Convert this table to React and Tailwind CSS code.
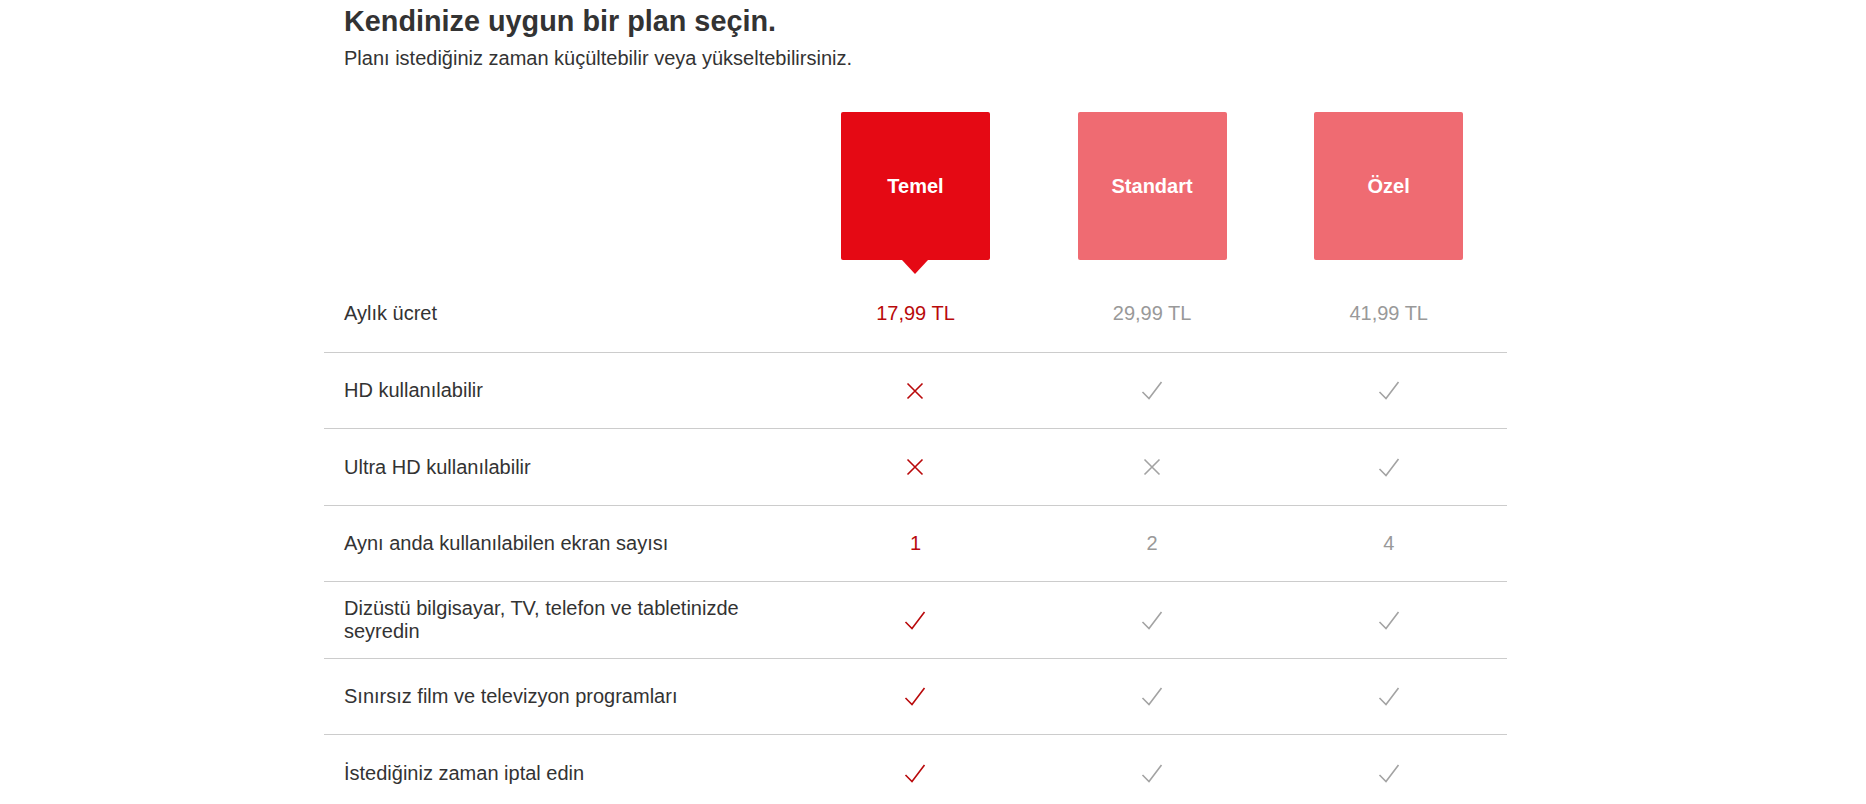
import React from "react";

const plans = ["Temel", "Standart", "Özel"];

const rows = [
  { label: "Aylık ücret", values: ["17,99 TL", "29,99 TL", "41,99 TL"], h: "h-[79px]" },
  { label: "HD kullanılabilir", values: ["x", "check", "check"], h: "h-[76px]" },
  { label: "Ultra HD kullanılabilir", values: ["x", "x", "check"], h: "h-[77px]" },
  { label: "Aynı anda kullanılabilen ekran sayısı", values: ["1", "2", "4"], h: "h-[76px]" },
  { label: "Dizüstü bilgisayar, TV, telefon ve tabletinizde seyredin", values: ["check", "check", "check"], h: "h-[77px]" },
  { label: "Sınırsız film ve televizyon programları", values: ["check", "check", "check"], h: "h-[76px]" },
  { label: "İstediğiniz zaman iptal edin", values: ["check", "check", "check"], h: "h-[76px]", last: true },
];

function Check({ color }) {
  return (
    <svg width="22" height="19" viewBox="0 0 22 19" fill="none">
      <polyline points="1.5,11 8,17.5 20.5,1" stroke={color} strokeWidth="1.6" strokeLinejoin="miter" />
    </svg>
  );
}

function Cross({ color }) {
  return (
    <svg width="18" height="18" viewBox="0 0 18 18" fill="none">
      <path d="M1.5 1.5 L16.5 16.5 M16.5 1.5 L1.5 16.5" stroke={color} strokeWidth="1.6" />
    </svg>
  );
}

function Cell({ value, selected }) {
  const color = selected ? "#b9090b" : "#a3a3a3";
  if (value === "check") return <Check color={color} />;
  if (value === "x") return <Cross color={color} />;
  return (
    <span className={selected ? "text-[#b9090b]" : "text-[#999999]"}>{value}</span>
  );
}

export default function App() {
  return (
    <div className="min-h-screen bg-white font-['Liberation_Sans',Arial,sans-serif] text-[#333333]">
      <div className="pl-[324px]">
        <div className="w-[1183px]">
          <div className="pl-[20px] pt-[5px]">
            <h1 className="text-[28.8px] font-bold leading-[1.15]">Kendinize uygun bir plan seçin.</h1>
            <p className="mt-[9px] text-[20px] leading-[1.15]">
              Planı istediğiniz zaman küçültebilir veya yükseltebilirsiniz.
            </p>
          </div>

          <div className="mt-[42px] grid grid-cols-[2fr_1fr_1fr_1fr]">
            <div />
            {plans.map((p, i) => (
              <div key={p} className="flex flex-col items-center">
                <div
                  className={
                    "flex h-[148px] w-[149px] items-center justify-center rounded-[2px] text-[20px] font-bold text-white " +
                    (i === 0 ? "bg-[#e50914]" : "bg-[#ef6b72]")
                  }
                >
                  {p}
                </div>
                {i === 0 ? (
                  <div className="h-0 w-0 border-x-[13px] border-t-[14px] border-x-transparent border-t-[#e50914]" />
                ) : (
                  <div className="h-[14px]" />
                )}
              </div>
            ))}
          </div>

          {rows.map((r) => (
            <div
              key={r.label}
              className={
                "grid grid-cols-[2fr_1fr_1fr_1fr] items-center text-[20px] leading-[1.15] " +
                r.h +
                (r.last ? "" : " border-b border-[#cccccc]")
              }
            >
              <div className="pl-[20px] pr-[20px]">{r.label}</div>
              {r.values.map((v, i) => (
                <div key={i} className="flex items-center justify-center">
                  <Cell value={v} selected={i === 0} />
                </div>
              ))}
            </div>
          ))}
        </div>
      </div>
    </div>
  );
}
